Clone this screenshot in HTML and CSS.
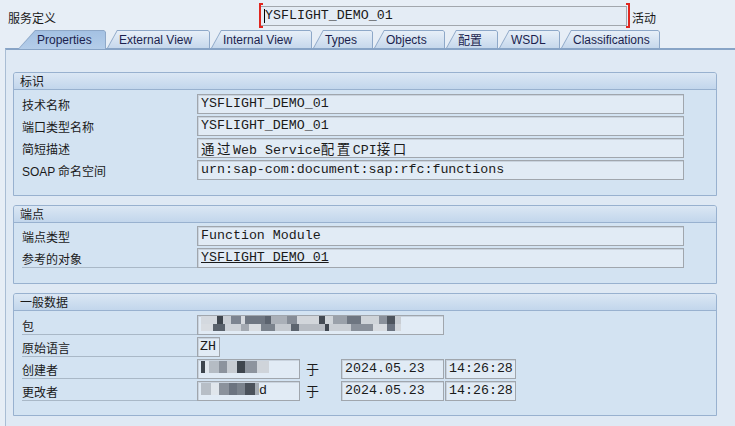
FILE: index.html
```html
<!DOCTYPE html>
<html lang="zh">
<head>
<meta charset="utf-8">
<title>服务定义</title>
<link rel="stylesheet" href="styles.css">
</head>
<body>
<div class="top">
  <span class="top-label">服务定义</span>
  <div class="top-field-wrap">
    <div class="top-field"><span class="caret"></span>YSFLIGHT_DEMO_01</div>
  </div>
  <span class="top-status">活动</span>
</div>

<div class="tabs">
  <div class="tab active w-prop"><span>Properties</span></div>
  <div class="tab w-ext"><span>External View</span></div>
  <div class="tab w-int"><span>Internal View</span></div>
  <div class="tab w-types"><span>Types</span></div>
  <div class="tab w-obj"><span>Objects</span></div>
  <div class="tab w-cfg"><span class="cn">配置</span></div>
  <div class="tab w-wsdl"><span>WSDL</span></div>
  <div class="tab w-cls"><span>Classifications</span></div>
</div>

<div class="content">
  <section class="group g1">
    <div class="group-head">标识</div>
    <div class="group-body">
      <div class="row"><div class="label">技术名称</div><div class="field f-wide">YSFLIGHT_DEMO_01</div></div>
      <div class="row"><div class="label">端口类型名称</div><div class="field f-wide">YSFLIGHT_DEMO_01</div></div>
      <div class="row"><div class="label">简短描述</div><div class="field f-wide"><span class="wide">通过</span>Web Service<span class="wide">配置</span>CPI<span class="wide">接口</span></div></div>
      <div class="row"><div class="label"><span class="lat">SOAP</span> 命名空间</div><div class="field f-wide">urn:sap-com:document:sap:rfc:functions</div></div>
    </div>
  </section>

  <section class="group g2">
    <div class="group-head">端点</div>
    <div class="group-body">
      <div class="row"><div class="label">端点类型</div><div class="field f-wide">Function Module</div></div>
      <div class="row"><div class="label ul">参考的对象</div><div class="field f-wide link">YSFLIGHT_DEMO_01</div></div>
    </div>
  </section>

  <section class="group g3">
    <div class="group-head">一般数据</div>
    <div class="group-body">
      <div class="row"><div class="label ul">包</div><div class="field f-pkg"><span class="mosaic m-pkg"></span></div></div>
      <div class="row"><div class="label ul">原始语言</div><div class="field f-lang">ZH</div></div>
      <div class="row">
        <div class="label ul">创建者</div>
        <div class="field f-user"><span class="mosaic m-c"></span></div>
        <span class="at">于</span>
        <div class="field f-date">2024.05.23</div>
        <div class="field f-time">14:26:28</div>
      </div>
      <div class="row">
        <div class="label ul">更改者</div>
        <div class="field f-user"><span class="mosaic m-u"></span>d</div>
        <span class="at">于</span>
        <div class="field f-date">2024.05.23</div>
        <div class="field f-time">14:26:28</div>
      </div>
    </div>
  </section>
</div>
</body>
</html>
```

FILE: styles.css
```css
html, body {
  margin: 0;
  padding: 0;
}
body {
  width: 735px;
  height: 426px;
  overflow: hidden;
  background: #e7eef6;
  font-family: "Noto Sans CJK SC", "Liberation Sans", sans-serif;
  font-size: 12px;
  color: #1a1a1a;
}

/* top line */
.top {
  display: flex;
  align-items: center;
  height: 30px;
  padding-left: 8px;
}
.top-label {
  width: 252px;
  line-height: 16px;
  padding-top: 5px;
}
.top-field-wrap {
  position: relative;
  padding: 0 3px 0 0;
}
.top-field-wrap::before,
.top-field-wrap::after {
  content: "";
  position: absolute;
  top: -1px;
  bottom: -2px;
  width: 2px;
  border: 2px solid #e0261f;
}
.top-field-wrap::before {
  left: -1px;
  border-right: none;
}
.top-field-wrap::after {
  right: 0;
  border-left: none;
}
.top-field {
  box-sizing: border-box;
  width: 367px;
  height: 20px;
  margin-top: 2px;
  border: 1px solid #a2a7ad;
  background: #e4ecf5;
  font-family: "Liberation Mono", monospace;
  font-size: 13.3px;
  line-height: 18px;
  padding-left: 3px;
  display: flex;
  align-items: center;
}
.caret {
  width: 1px;
  height: 14px;
  background: #000;
}
.top-status {
  padding-left: 2px;
  padding-top: 5px;
}

/* tabs */
.tabs {
  display: flex;
  gap: 1px;
  height: 18px;
  padding-left: 18px;
  align-items: flex-end;
}
.tab {
  position: relative;
  height: 18px;
  box-sizing: border-box;
  font-family: "Liberation Sans", "Noto Sans CJK SC", sans-serif;
  font-size: 12px;
  color: #1b1f4e;
  line-height: 18px;
  padding-left: 12px;
  padding-top: 1px;
}
.tab::before {
  content: "";
  position: absolute;
  inset: 0;
  background: #8ea8c8;
  clip-path: polygon(0 100%, 10px 0, calc(100% - 2px) 0, 100% 2px, 100% 100%);
}
.tab::after {
  content: "";
  position: absolute;
  inset: 1px 1px 0 1px;
  background: linear-gradient(#e7eff8, #c6d8ec);
  clip-path: polygon(0 100%, 9.4px 0, calc(100% - 1px) 0, 100% 1px, 100% 100%);
}
.tab span {
  position: relative;
  z-index: 1;
}
.tab .cn {
  font-family: "Noto Sans CJK SC", sans-serif;
}
.tab.active {
  padding-left: 19px;
  height: 19px;
  margin-bottom: -1px;
  z-index: 2;
}
.tab.active::before {
  clip-path: polygon(0 100%, 17px 0, calc(100% - 2px) 0, 100% 2px, 100% 100%);
}
.tab.active::after {
  background: linear-gradient(#a4c1e3, #b4cde9);
  inset: 1px 1px 0 1px;
  clip-path: polygon(0 100%, 16.3px 0, calc(100% - 1px) 0, 100% 1px, 100% 100%);
}
.w-prop { width: 88px; }
.w-ext { width: 103px; }
.w-int { width: 101px; }
.w-types { width: 60px; }
.w-obj { width: 71px; }
.w-cfg { width: 52px; }
.w-wsdl { width: 61px; }
.w-cls { width: 99px; }

/* content */
.content {
  margin-left: 5px;
  height: 378px;
  box-sizing: border-box;
  border-top: 2px solid #88a4c6;
  border-left: 1px solid #a9bdd4;
  background: #dfe9f4;
  padding: 22px 0 0 7px;
}
.group {
  width: 704px;
  box-sizing: border-box;
  border: 1px solid #98b1cf;
  border-radius: 3px 3px 0 0;
  background: #d3e3f2;
  margin-bottom: 9px;
}
.group-head {
  height: 16px;
  line-height: 16px;
  border-bottom: 1px solid #98b1cf;
  background: linear-gradient(#dbe7f4, #c2d6ec);
  padding-left: 6px;
  border-radius: 2px 2px 0 0;
}
.group-body {
  display: flex;
  flex-direction: column;
  gap: 2px;
  padding: 4px 0 15px 8px;
}
.g2 .group-body {
  padding-top: 3px;
}
.g3 .group-body {
  padding-bottom: 14px;
}
.row {
  display: flex;
  align-items: flex-start;
  height: 20px;
}
.label {
  box-sizing: border-box;
  width: 175px;
  height: 20px;
  line-height: 20px;
  padding-top: 1px;
}
.label.ul {
  border-bottom: 1px solid #a9b8c7;
}
.lat {
  font-family: "Liberation Sans", sans-serif;
}
.field {
  box-sizing: border-box;
  height: 20px;
  border: 1px solid #a0a6ad;
  box-shadow: inset 1px 1px 0 #c9d3de;
  background: #e1ebf5;
  font-family: "Liberation Mono", "Noto Sans CJK SC", monospace;
  font-size: 13.3px;
  line-height: 18px;
  padding-left: 3px;
  white-space: nowrap;
  overflow: hidden;
}
.wide {
  font-family: "Noto Sans CJK SC", sans-serif;
  font-size: 13.5px;
  letter-spacing: 2.5px;
}
.f-wide { width: 487px; }
.link { text-decoration: underline; }
.f-pkg { width: 247px; }
.f-lang { width: 23px; padding-left: 2px; }
.f-user { width: 103px; }
.at {
  width: 41px;
  padding-left: 6px;
  box-sizing: border-box;
  line-height: 20px;
  font-size: 13px;
}
.f-date { width: 103px; margin-right: 1px; }
.f-time { width: 71px; }

/* blurred (pixelated) values */
.mosaic {
  display: inline-block;
  vertical-align: middle;
  margin-top: -2px;
  height: 16px;
}
.m-pkg {
  width: 200px;
  background:
    linear-gradient(90deg, #d4d9df 0 16px, #3e454d 16px 22px, #c9ced4 22px 30px, #7c8490 30px 40px, #d6dadf 40px 44px,
      #6f7782 44px 64px, #5b636e 64px 70px, #aab0b8 70px 86px, #858c96 86px 96px, #d2d6db 96px 118px,
      #434a53 118px 124px, #d0d5da 124px 132px, #9aa1aa 132px 146px, #6e7681 146px 160px, #cfd4d9 160px 178px,
      #8a919b 178px 186px, #4d545d 186px 194px, #c8cdd3 194px 200px) top / 100% 9px no-repeat,
    linear-gradient(90deg, #d8dce1 0 12px, #5a626c 12px 24px, #cdd2d8 24px 40px, #a3a9b1 40px 48px, #d9dde1 48px 60px,
      #7b838d 60px 74px, #c4c9cf 74px 90px, #5c646e 90px 98px, #b7bcc3 98px 124px, #3f464f 124px 128px,
      #c9ced4 128px 150px, #8a919b 150px 172px, #d7dbe0 172px 186px, #6b7380 186px 194px, #d4d8dd 194px 200px) bottom / 100% 7px no-repeat;
}
.m-c {
  width: 68px;
  background: linear-gradient(90deg, #3d444c 0 4px, #e0e6ec 4px 8px, #b5bcc4 8px 18px, #8c939d 18px 26px, #c7ccd2 26px 36px,
    #3e454d 36px 44px, #8d949e 44px 56px, #cfd4da 56px 68px);
  height: 12px;
}
.m-u {
  width: 58px;
  background: linear-gradient(90deg, #b7bec6 0 10px, #e0e6ec 10px 18px, #8b929c 18px 28px, #6c7480 28px 36px,
    #7b838d 36px 44px, #4b525b 44px 54px, #a6adb5 54px 58px);
  height: 12px;
}
```
